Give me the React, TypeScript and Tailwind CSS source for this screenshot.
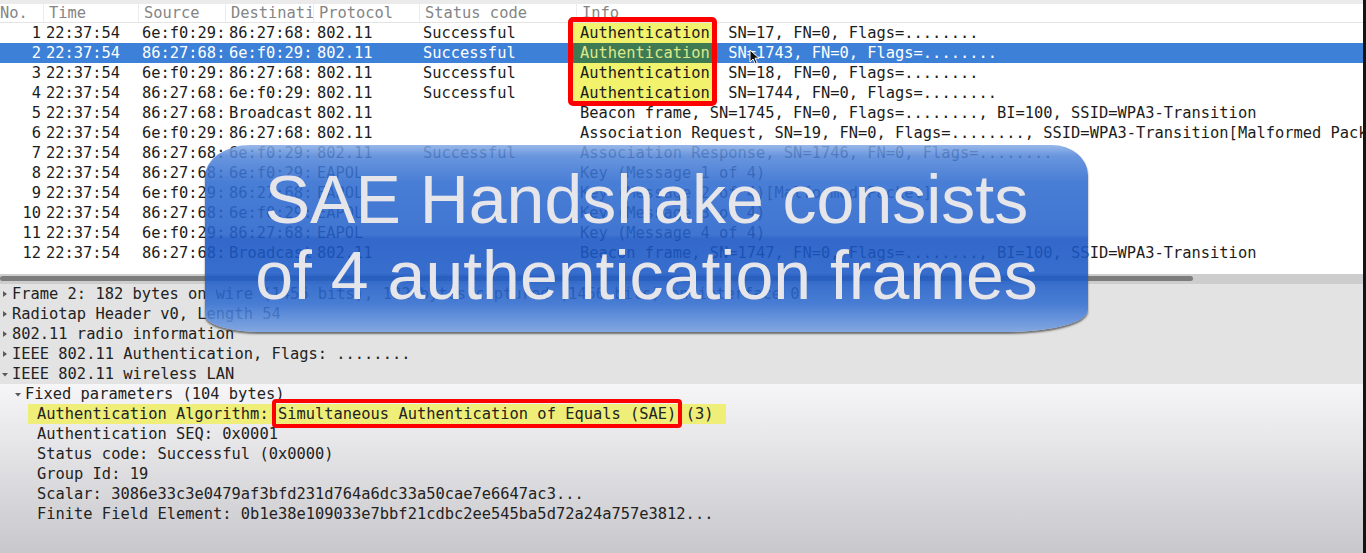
import React from 'react';

// ── Packet list data ──────────────────────────────────────────────────────────

interface Packet {
  no:     number;
  src:    string;
  dst:    string;
  proto:  string;
  status: string;
  info:   string;
  auth?:  boolean;
}

const PACKETS: Packet[] = [
  { no: 1,  src: '6e:f0:29:', dst: '86:27:68:', proto: '802.11', status: 'Successful', info: ', SN=17, FN=0, Flags=........', auth: true },
  { no: 2,  src: '86:27:68:', dst: '6e:f0:29:', proto: '802.11', status: 'Successful', info: ', SN=1743, FN=0, Flags=........', auth: true },
  { no: 3,  src: '6e:f0:29:', dst: '86:27:68:', proto: '802.11', status: 'Successful', info: ', SN=18, FN=0, Flags=........', auth: true },
  { no: 4,  src: '86:27:68:', dst: '6e:f0:29:', proto: '802.11', status: 'Successful', info: ', SN=1744, FN=0, Flags=........', auth: true },
  { no: 5,  src: '86:27:68:', dst: 'Broadcast', proto: '802.11', status: '',           info: 'Beacon frame, SN=1745, FN=0, Flags=........, BI=100, SSID=WPA3-Transition' },
  { no: 6,  src: '6e:f0:29:', dst: '86:27:68:', proto: '802.11', status: '',           info: 'Association Request, SN=19, FN=0, Flags=........, SSID=WPA3-Transition[Malformed Packet]' },
  { no: 7,  src: '86:27:68:', dst: '6e:f0:29:', proto: '802.11', status: 'Successful', info: 'Association Response, SN=1746, FN=0, Flags=........' },
  { no: 8,  src: '86:27:68:', dst: '6e:f0:29:', proto: 'EAPOL',  status: '',           info: 'Key (Message 1 of 4)' },
  { no: 9,  src: '6e:f0:29:', dst: '86:27:68:', proto: 'EAPOL',  status: '',           info: 'Key (Message 2 of 4)[Malformed Packet]' },
  { no: 10, src: '86:27:68:', dst: '6e:f0:29:', proto: 'EAPOL',  status: '',           info: 'Key (Message 3 of 4)' },
  { no: 11, src: '6e:f0:29:', dst: '86:27:68:', proto: 'EAPOL',  status: '',           info: 'Key (Message 4 of 4)' },
  { no: 12, src: '86:27:68:', dst: 'Broadcast', proto: '802.11', status: '',           info: 'Beacon frame, SN=1747, FN=0, Flags=........, BI=100, SSID=WPA3-Transition' },
];

const SELECTED = 2;

// ── Tree expander triangle ────────────────────────────────────────────────────

function Expander({ open }: { open?: boolean }) {
  return (
    <svg width="6" height="8" viewBox="0 0 6 8" className="shrink-0">
      {open
        ? <polygon points="0,3 6,3 3,6.5" fill="#5a5a5a" />
        : <polygon points="1,1 5,4 1,7" fill="#5a5a5a" />}
    </svg>
  );
}

function TreeRow({ level, open, leaf, children }: { level: number; open?: boolean; leaf?: boolean; children: React.ReactNode }) {
  const indent = level === 0 ? 'pl-[2px]' : level === 1 ? 'pl-[15px]' : 'pl-[37px]';
  return (
    <div className={`h-[20px] flex items-center whitespace-nowrap ${indent}`}>
      {!leaf && <Expander open={open} />}
      {!leaf && <span className="w-[4px] shrink-0" />}
      {children}
    </div>
  );
}

// ── Main ──────────────────────────────────────────────────────────────────────

export default function App() {
  return (
    <div className="w-[1366px] h-[553px] flex overflow-hidden bg-white font-['DejaVu_Sans_Mono',monospace] text-[15.4px] leading-[20px] text-[#1c1c1c]">
      <div className="relative w-[1363px] flex flex-col">

        {/* Column header */}
        <div className="h-[4px] bg-[#ebebeb] shrink-0" />
        <div className="h-[19px] shrink-0 flex items-center border-b border-[#e4e4e4] bg-white text-[#858585] whitespace-nowrap overflow-hidden">
          <div className="w-[43px] h-full flex items-center">No.</div>
          <div className="w-[95px] h-full flex items-center pl-[5px] border-l border-[#ececec]">Time</div>
          <div className="w-[87px] h-full flex items-center pl-[5px] border-l border-[#ececec]">Source</div>
          <div className="w-[88px] h-full flex items-center pl-[5px] border-l border-[#ececec] overflow-hidden">Destination</div>
          <div className="w-[106px] h-full flex items-center pl-[5px] border-l border-[#ececec]">Protocol</div>
          <div className="w-[157px] h-full flex items-center pl-[5px] border-l border-[#ececec]">Status code</div>
          <div className="flex-1 h-full flex items-center pl-[5px] border-l border-[#ececec]">Info</div>
        </div>

        {/* Packet rows */}
        <div className="flex flex-col shrink-0">
          {PACKETS.map(p => {
            const sel = p.no === SELECTED;
            return (
              <div
                key={p.no}
                className={`h-[20px] flex items-center whitespace-nowrap ${sel ? 'bg-[#3d80d8] text-white' : ''}`}
              >
                <span className="w-[41px] text-right shrink-0">{p.no}</span>
                <span className="ml-[5px] w-[96px] shrink-0">22:37:54</span>
                <span className="w-[87px] shrink-0 overflow-hidden">{p.src}</span>
                <span className="w-[88px] shrink-0 overflow-hidden">{p.dst}</span>
                <span className="w-[106px] shrink-0">{p.proto}</span>
                <span className="w-[150px] shrink-0">{p.status}</span>
                {p.auth ? (
                  <span className="flex h-full items-center">
                    <span className={`h-full flex items-center pl-[7px] pr-[3px] ${sel ? 'bg-[#3e7b52] text-[#dde98c]' : 'bg-[#f2f26c]'}`}>
                      Authentication
                    </span>
                    <span className="-ml-[3px]">{p.info}</span>
                  </span>
                ) : (
                  <span className="pl-[7px]">{p.info}</span>
                )}
              </div>
            );
          })}
        </div>

        {/* Horizontal scrollbar */}
        <div className="h-[11px] shrink-0" />
        <div className="h-[10px] shrink-0 bg-[#cdcdcd] pt-[2px]">
          <div className="h-[5px] w-[1193px] rounded-full bg-[#7c7c7c]" />
        </div>

        {/* Packet details */}
        <div className="h-[100px] shrink-0 bg-[#e3e3e3] text-[#222]">
          <TreeRow level={0}>Frame 2: 182 bytes on wire (1456 bits), 182 bytes captured (1456 bits) on interface 0</TreeRow>
          <TreeRow level={0}>Radiotap Header v0, Length 54</TreeRow>
          <TreeRow level={0}>802.11 radio information</TreeRow>
          <TreeRow level={0}>IEEE 802.11 Authentication, Flags: ........</TreeRow>
          <TreeRow level={0} open>IEEE 802.11 wireless LAN</TreeRow>
        </div>
        <div className="flex-1 bg-[linear-gradient(to_bottom,#f6f5f7,#c8c7cb)] text-[#222]">
          <TreeRow level={1} open>Fixed parameters (104 bytes)</TreeRow>
          <div className="h-[20px] flex items-center whitespace-nowrap pl-[28px]">
            <span className="h-full flex items-center bg-[#eeee78] pl-[9px] pr-[13px]">
              Authentication Algorithm:&nbsp;
              <span className="relative">
                Simultaneous Authentication of Equals (SAE)
                <span className="absolute -left-[6px] -right-[6px] -top-[5px] -bottom-[4px] border-[4px] border-[#ff0000] rounded-[4px]" />
              </span>
              &nbsp;(3)
            </span>
          </div>
          <TreeRow level={2} leaf>Authentication SEQ: 0x0001</TreeRow>
          <TreeRow level={2} leaf>Status code: Successful (0x0000)</TreeRow>
          <TreeRow level={2} leaf>Group Id: 19</TreeRow>
          <TreeRow level={2} leaf>Scalar: 3086e33c3e0479af3bfd231d764a6dc33a50cae7e6647ac3...</TreeRow>
          <TreeRow level={2} leaf>Finite Field Element: 0b1e38e109033e7bbf21cdbc2ee545ba5d72a24a757e3812...</TreeRow>
        </div>

        {/* Red annotation around Authentication frames */}
        <div className="absolute left-[568px] top-[17px] w-[149px] h-[89px] border-[5px] border-[#ff0000] rounded-[5px]" />

        {/* Mouse pointer */}
        <svg className="absolute left-[749px] top-[49px]" width="11" height="16" viewBox="0 0 11 16">
          <path d="M1 1 L1 13 L4 10 L6.2 14.6 L8.2 13.7 L6 9.2 L10 9.2 Z" fill="#111" stroke="#fff" strokeWidth="1" strokeLinejoin="round" />
        </svg>

        {/* Caption banner */}
        <div className="absolute left-[205px] top-[145px] w-[883px] h-[187px] rounded-[45px_36px_80px_55px/32px_30px_22px_17px] bg-[linear-gradient(to_bottom,rgba(135,172,230,0.86)_0%,rgba(80,132,216,0.86)_6%,rgba(48,108,208,0.88)_20%,rgba(38,98,203,0.88)_48%,rgba(26,86,196,0.89)_50%,rgba(28,90,198,0.88)_70%,rgba(50,110,210,0.87)_85%,rgba(115,158,225,0.86)_100%)] shadow-[0_2px_2px_rgba(60,60,60,0.7)] pt-[16px] text-center font-['Liberation_Sans',Arial,sans-serif] text-[68px] leading-[76px] text-[#e6e6ea]">
          <div>SAE Handshake consists</div>
          <div>of 4 authentication frames</div>
        </div>
      </div>

      {/* Dark edge */}
      <div className="w-[3px] bg-[#141414]" />
    </div>
  );
}
